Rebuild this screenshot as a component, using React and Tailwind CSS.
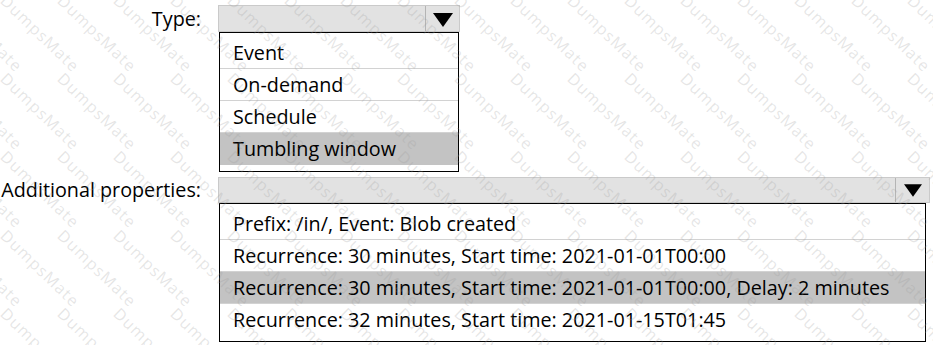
import React from 'react';

const typeOptions = ['Event', 'On-demand', 'Schedule', 'Tumbling window'];
const propOptions = [
  'Prefix: /in/, Event: Blob created',
  'Recurrence: 30 minutes, Start time: 2021-01-01T00:00',
  'Recurrence: 30 minutes, Start time: 2021-01-01T00:00, Delay: 2 minutes',
  'Recurrence: 32 minutes, Start time: 2021-01-15T01:45',
];

const Arrow = ({ w, h }) => (
  <svg width={w} height={h} viewBox="0 0 20 14">
    <polygon points="0,0 20,0 10,14" fill="#000" />
  </svg>
);

const OptionList = ({ options, selected, className }) => (
  <div className={`border border-black bg-white pt-[4px] ${className}`}>
    {options.map((opt, i) => (
      <div
        key={opt}
        className={`h-[32px] pl-[13px] leading-[31px] whitespace-nowrap ${
          i < options.length - 1 ? 'border-b border-[#d2d2d2]' : ''
        } ${i === selected ? 'bg-[#c3c3c3]' : ''}`}
      >
        {opt}
      </div>
    ))}
  </div>
);

// watermark grid, sits over the form
const Watermark = () => {
  const cols = Array.from({ length: 18 }, (_, i) => i - 1);
  const rows = [-86, -8, 70, 148, 227, 305];
  return (
    <div className="absolute inset-0 pointer-events-none overflow-hidden">
      {rows.map((top) =>
        cols.map((c) => (
          <span
            key={`${top}-${c}`}
            className="absolute origin-top-left rotate-[44deg] text-[16px] tracking-[1.2px] leading-none text-[#9a9a9a]/25 font-['Open_Sans',sans-serif]"
            style={{ left: 9 + c * 56.7, top }}
          >
            DumpsMate
          </span>
        ))
      )}
    </div>
  );
};

export default function App() {
  return (
    <div className="relative w-[933px] h-[345px] bg-white overflow-hidden text-[19.75px] text-black font-['Open_Sans',sans-serif]">
      <div className="flex pt-[5px]">
        <div className="w-[201px] flex justify-end leading-[27px] whitespace-nowrap">Type:</div>
        <div className="ml-[17px]">
          <div className="w-[242px] h-[27px] bg-[#e2e2e2] border border-[#cacaca] flex justify-end">
            <div className="w-[34px] border-l border-[#b4b4b4] flex items-center justify-center pt-[2px]">
              <Arrow w={20} h={14} />
            </div>
          </div>
          <OptionList options={typeOptions} selected={3} className="ml-px w-[240px] h-[140px]" />
        </div>
      </div>

      <div className="flex mt-[5px]">
        <div className="w-[201px] flex justify-end leading-[26px] whitespace-nowrap">Additional properties:</div>
        <div className="ml-[17px]">
          <div className="w-[712px] h-[26px] bg-[#e2e2e2] border border-[#cacaca] flex justify-end">
            <div className="w-[34px] border-l border-[#b4b4b4] flex items-center justify-center pt-[1px]">
              <Arrow w={18} h={13} />
            </div>
          </div>
          <OptionList options={propOptions} selected={2} className="ml-px w-[707px] h-[139px]" />
        </div>
      </div>

      <Watermark />
    </div>
  );
}
